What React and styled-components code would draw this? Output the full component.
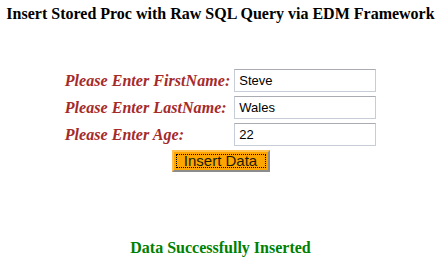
import styled, { createGlobalStyle } from 'styled-components';

const GlobalStyle = createGlobalStyle`
  html, body {
    margin: 0;
    padding: 0;
    background: #ffffff;
  }
  body {
    font-family: 'Liberation Serif', 'Times New Roman', serif;
  }
`;

const Page = styled.div`
  width: 447px;
  height: 262px;
  display: flex;
  flex-direction: column;
  align-items: center;
  box-sizing: border-box;
  padding-top: 5px;
  padding-right: 6px;
`;

const Title = styled.h3`
  margin: 0;
  font-size: 16px;
  font-weight: bold;
  color: #000000;
  white-space: nowrap;
`;

const Form = styled.div`
  margin-top: 46px;
  display: grid;
  grid-template-columns: auto 142px;
  column-gap: 4px;
  row-gap: 4px;
  align-items: center;
`;

const Label = styled.label`
  font-size: 16px;
  font-weight: bold;
  font-style: italic;
  color: #a52a2a;
  white-space: nowrap;
  letter-spacing: 0.05px;
`;

const Input = styled.input`
  box-sizing: border-box;
  width: 142px;
  height: 23px;
  padding: 1px 4px;
  border: 1px solid #c7cdd6;
  border-top-color: #a9acb2;
  font-family: 'Liberation Sans', Arial, sans-serif;
  font-size: 13px;
  color: #000000;
  background: #ffffff;
  outline: none;
`;

const ButtonRow = styled.div`
  margin-top: 4px;
  display: flex;
  justify-content: center;
`;

const Button = styled.button`
  box-sizing: border-box;
  width: 98px;
  height: 22px;
  padding: 0 0 1px 0;
  background: #ffa500;
  border: 2px solid;
  border-color: #ffc04d #8c8c8c #8c8c8c #ffc04d;
  font-family: 'Liberation Sans', Arial, sans-serif;
  font-size: 15px;
  color: #1a1a00;
  cursor: pointer;
  position: relative;

  &::after {
    content: '';
    position: absolute;
    left: 2px;
    top: 2px;
    right: 2px;
    bottom: 2px;
    border: 1px dotted #000000;
  }
`;

const Message = styled.div`
  margin-top: 67px;
  font-size: 16px;
  font-weight: bold;
  color: #008000;
`;

export default function App() {
  return (
    <>
      <GlobalStyle />
      <Page>
        <Title>Insert Stored Proc with Raw SQL Query via EDM Framework</Title>
        <Form>
          <Label>Please Enter FirstName:</Label>
          <Input defaultValue="Steve" />
          <Label>Please Enter LastName:</Label>
          <Input defaultValue="Wales" />
          <Label>Please Enter Age:</Label>
          <Input defaultValue="22" />
        </Form>
        <ButtonRow>
          <Button>Insert Data</Button>
        </ButtonRow>
        <Message>Data Successfully Inserted</Message>
      </Page>
    </>
  );
}
